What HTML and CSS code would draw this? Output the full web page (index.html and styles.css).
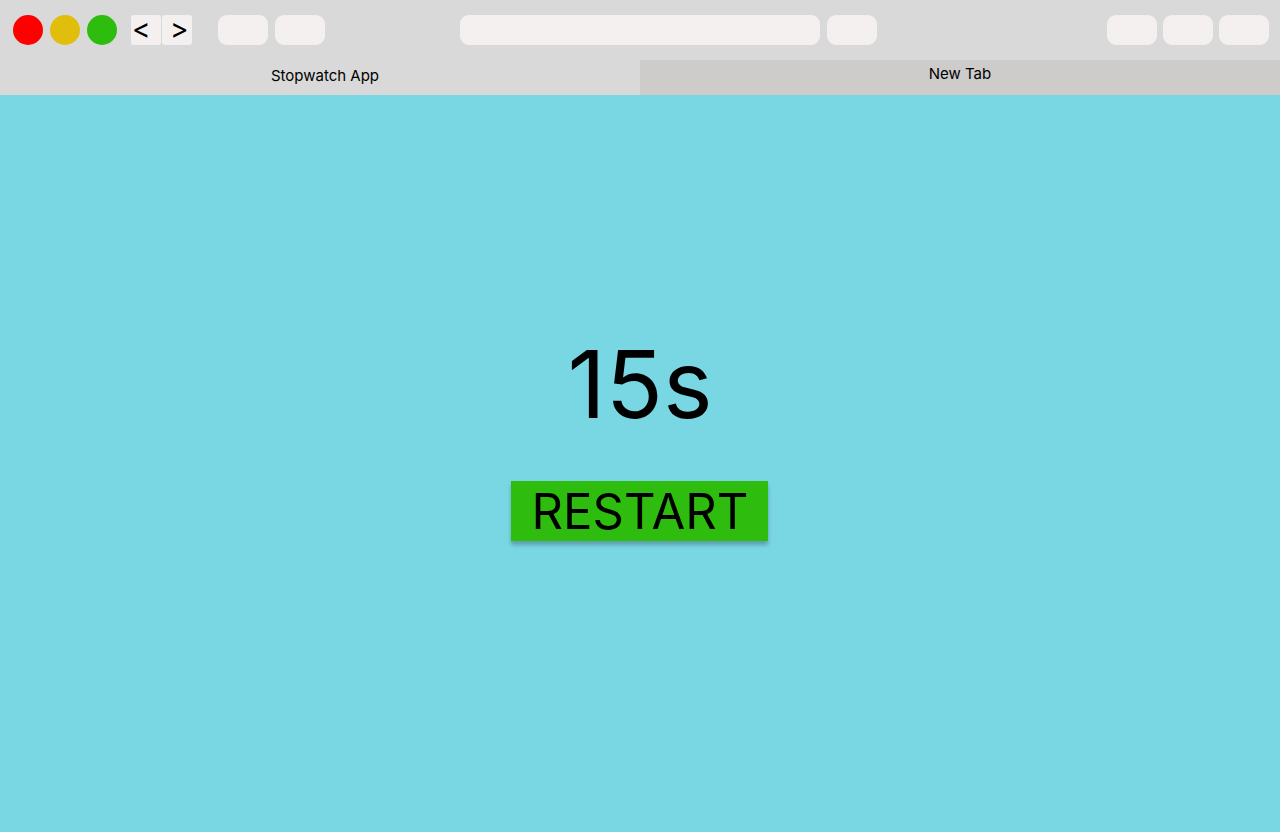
FILE: index.html
```html
<!DOCTYPE html>
<html lang="en">
<head>
<meta charset="utf-8">
<title>Stopwatch App</title>
<link rel="stylesheet" href="styles.css">
</head>
<body>
<div class="browser">
  <div class="toolbar">
    <div class="group lights">
      <span class="light red"></span>
      <span class="light yellow"></span>
      <span class="light green"></span>
    </div>
    <div class="group nav">
      <span class="navbtn back">&lt;</span>
      <span class="navbtn fwd">&gt;</span>
    </div>
    <div class="group tools">
      <span class="pill"></span>
      <span class="pill"></span>
    </div>
    <div class="group center">
      <span class="address"></span>
      <span class="pill"></span>
    </div>
    <div class="group right">
      <span class="pill"></span>
      <span class="pill"></span>
      <span class="pill"></span>
    </div>
  </div>
  <div class="tabs">
    <div class="tab active">Stopwatch App</div>
    <div class="tab inactive">New Tab</div>
  </div>
  <main class="content">
    <div class="time">15s</div>
    <button class="restart">RESTART</button>
  </main>
</div>
</body>
</html>
```

FILE: styles.css
```css
* { box-sizing: border-box; }
html, body { margin: 0; padding: 0; }
body {
  width: 1280px;
  height: 832px;
  overflow: hidden;
  font-family: Inter, "Noto Sans", sans-serif;
  background: #79d7e4;
}
.browser {
  display: flex;
  flex-direction: column;
  height: 832px;
}
.toolbar {
  height: 60px;
  background: #d9d9d9;
  display: flex;
  align-items: center;
  padding: 0 11px 0 13px;
}
.group { display: flex; align-items: center; }
.lights { gap: 7px; }
.light {
  width: 30px;
  height: 30px;
  border-radius: 50%;
  display: block;
}
.red { background: #ff0000; }
.yellow { background: #e1be0b; }
.green { background: #2ebc0e; }
.nav { gap: 1px; margin-left: 14px; }
.navbtn {
  width: 30px;
  height: 30px;
  background: #f5f0f0;
  border-radius: 3px;
  display: flex;
  align-items: center;
  font-family: Inter, "Noto Sans", sans-serif;
  font-size: 28px;
  line-height: 30px;
  color: #000;
  padding-bottom: 2px;
}
.back { padding-left: 1px; }
.fwd { padding-left: 8px; }
.tools { gap: 7px; margin-left: 26px; }
.pill {
  width: 50px;
  height: 30px;
  background: #f5f0f0;
  border-radius: 9px;
  display: block;
}
.center { gap: 7px; margin-left: 135px; }
.address {
  width: 360px;
  height: 30px;
  background: #f5f0f0;
  border-radius: 9px;
  display: block;
}
.right { gap: 6px; margin-left: auto; }
.tabs {
  display: flex;
  height: 35px;
  background: #d9d9d9;
}
.tab {
  width: 640px;
  flex: 0 0 640px;
  display: flex;
  justify-content: center;
  font-size: 15px;
  line-height: 18px;
  color: #000;
}
.active { background: #d9d9d9; padding-top: 7px; padding-left: 10px; }
.inactive { background: #cdcccb; padding-top: 5px; }
.content {
  flex: 1;
  background: #79d7e4;
  display: flex;
  flex-direction: column;
  align-items: center;
  padding-top: 231px;
}
.time {
  font-size: 94px;
  line-height: 116px;
  color: #000;
}
.restart {
  margin-top: 39px;
  margin-right: 2px;
  width: 257px;
  height: 60px;
  background: #2ebc0e;
  border: none;
  border-radius: 0;
  font-family: Inter, "Noto Sans", sans-serif;
  font-size: 49px;
  color: #000;
  padding: 0 0 0 2px;
  box-shadow: 0 4px 4px rgba(0, 0, 0, 0.25);
  display: flex;
  align-items: center;
  justify-content: center;
}
```
